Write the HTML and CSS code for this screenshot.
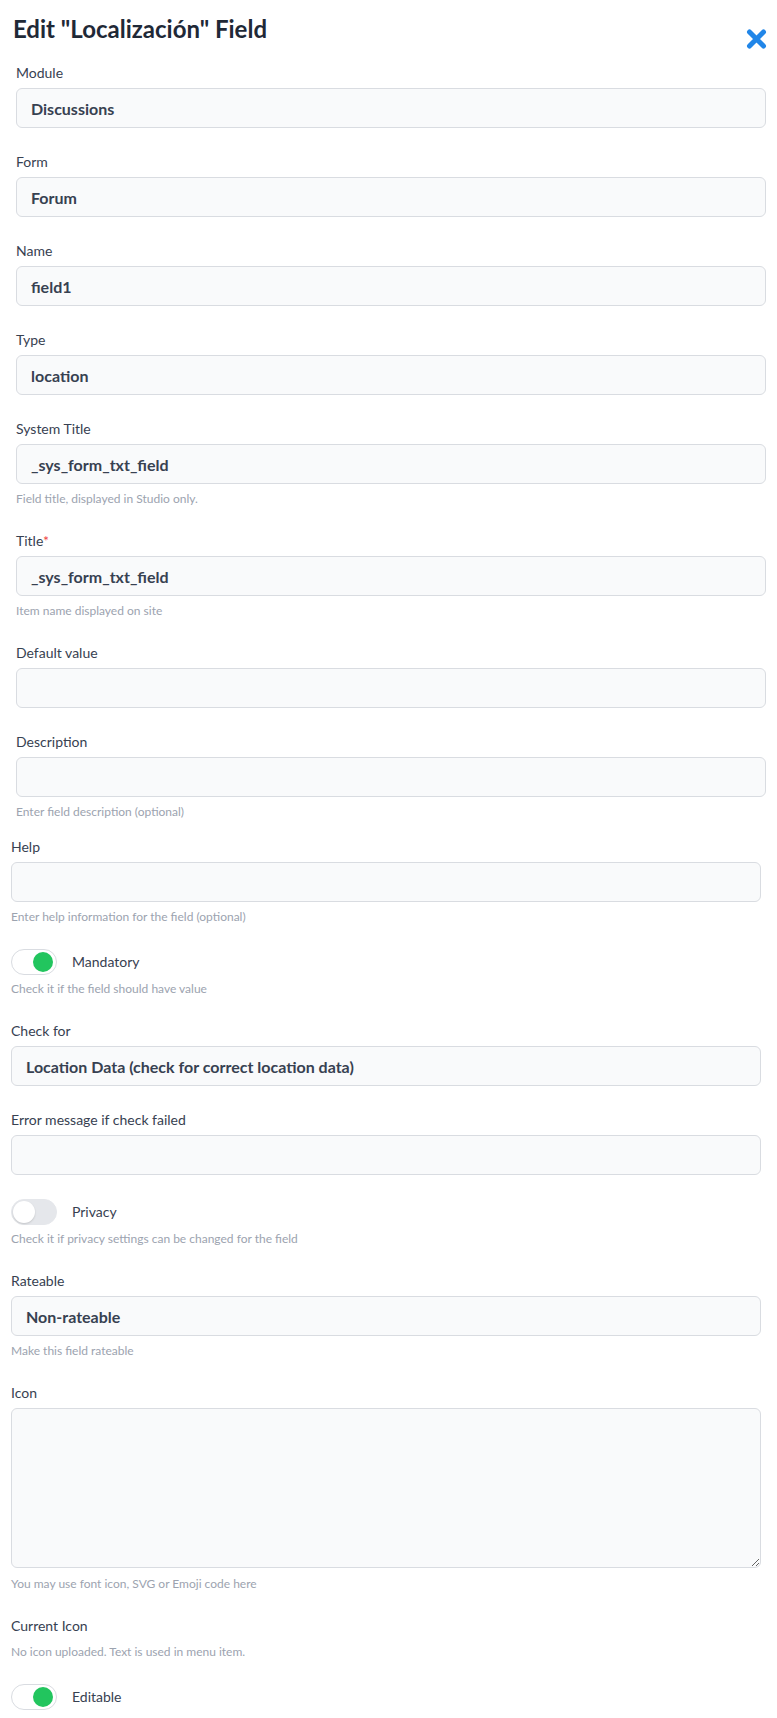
FILE: index.html
```html
<!DOCTYPE html>
<html lang="en">
<head>
<meta charset="utf-8">
<title>Edit Field</title>
<link rel="stylesheet" href="styles.css">
</head>
<body>
<div class="page">
  <header class="head">
    <h1 class="title">Edit "Localización" Field</h1>
    <button class="close" type="button" aria-label="Close">
      <svg width="21" height="20" viewBox="0 0 21 20"><path d="M3.5 3 L17.5 17 M17.5 3 L3.5 17" stroke="#2186e8" stroke-width="5" stroke-linecap="round" fill="none"/></svg>
    </button>
  </header>

  <section class="sec sec-a">
    <div class="grp">
      <label class="lbl">Module</label>
      <div class="inp">Discussions</div>
    </div>
    <div class="grp">
      <label class="lbl">Form</label>
      <div class="inp">Forum</div>
    </div>
    <div class="grp">
      <label class="lbl">Name</label>
      <div class="inp">field1</div>
    </div>
    <div class="grp">
      <label class="lbl">Type</label>
      <div class="inp">location</div>
    </div>
    <div class="grp">
      <label class="lbl">System Title</label>
      <div class="inp">_sys_form_txt_field</div>
      <div class="hint">Field title, displayed in Studio only.</div>
    </div>
    <div class="grp">
      <label class="lbl">Title<span class="req">*</span></label>
      <div class="inp">_sys_form_txt_field</div>
      <div class="hint">Item name displayed on site</div>
    </div>
    <div class="grp">
      <label class="lbl">Default value</label>
      <div class="inp"></div>
    </div>
    <div class="grp">
      <label class="lbl">Description</label>
      <div class="inp"></div>
      <div class="hint">Enter field description (optional)</div>
    </div>
  </section>

  <section class="sec sec-b">
    <div class="grp">
      <label class="lbl">Help</label>
      <div class="inp"></div>
      <div class="hint">Enter help information for the field (optional)</div>
    </div>
    <div class="grp">
      <div class="sw-row"><span class="sw on"></span><span class="sw-text">Mandatory</span></div>
      <div class="hint hint-sw">Check it if the field should have value</div>
    </div>
    <div class="grp">
      <label class="lbl">Check for</label>
      <div class="inp">Location Data (check for correct location data)</div>
    </div>
    <div class="grp">
      <label class="lbl">Error message if check failed</label>
      <div class="inp"></div>
    </div>
    <div class="grp">
      <div class="sw-row"><span class="sw off"></span><span class="sw-text">Privacy</span></div>
      <div class="hint hint-sw">Check it if privacy settings can be changed for the field</div>
    </div>
    <div class="grp">
      <label class="lbl">Rateable</label>
      <div class="inp">Non-rateable</div>
      <div class="hint">Make this field rateable</div>
    </div>
    <div class="grp">
      <label class="lbl">Icon</label>
      <textarea class="area"></textarea>
      <div class="hint hint-area">You may use font icon, SVG or Emoji code here</div>
    </div>
    <div class="grp">
      <label class="lbl lbl-cur">Current Icon</label>
      <div class="hint hint-cur">No icon uploaded. Text is used in menu item.</div>
    </div>
    <div class="grp">
      <div class="sw-row"><span class="sw on"></span><span class="sw-text">Editable</span></div>
    </div>
  </section>
</div>
</body>
</html>
```

FILE: styles.css
```css
* { box-sizing: border-box; }
html, body { margin: 0; padding: 0; background: #ffffff; }
body {
  font-family: Lato, "Open Sans", "Liberation Sans", sans-serif;
  color: #374151;
  width: 777px;
}
.page { padding: 0; }
.head {
  display: flex;
  justify-content: space-between;
  align-items: flex-start;
  padding: 14px 10px 0 13px;
  height: 63px;
}
.title {
  margin: 0;
  font-size: 24px;
  line-height: 30px;
  font-weight: 700;
  color: #1f2937;
}
.close {
  border: 0;
  background: none;
  padding: 0;
  margin-top: 15px;
  width: 21px;
  height: 20px;
  cursor: pointer;
}
.close svg { display: block; }
.sec { display: flex; flex-direction: column; width: 750px; }
.sec-a { margin-left: 16px; gap: 24px; }
.sec-b { margin-left: 11px; margin-top: 17px; gap: 24px; }
.grp { display: flex; flex-direction: column; }
.lbl {
  display: block;
  font-size: 14px;
  line-height: 20px;
  color: #374151;
  margin-bottom: 5px;
}
.lbl-cur { margin-bottom: 0; }
.req { color: #ef4444; }
.inp {
  height: 40px;
  border: 1px solid #d9dce1;
  border-radius: 6px;
  background: #f9fafb;
  padding: 0 14px;
  display: flex;
  align-items: center;
  font-size: 16px;
  font-weight: 700;
  color: #374151;
}
.hint {
  font-size: 12px;
  line-height: 16px;
  color: #9ca3af;
  margin-top: 7px;
}
.hint-sw { margin-top: 6px; }
.hint-cur { margin-top: 8px; }
.hint-area { margin-top: 8px; }
.area {
  display: block;
  width: 750px;
  height: 160px;
  border: 1px solid #d9dce1;
  border-radius: 6px;
  background: #f9fafb;
  resize: vertical;
  font: inherit;
  margin: 0;
}
.sw-row { display: flex; align-items: center; gap: 15px; height: 26px; }
.sw {
  position: relative;
  display: block;
  width: 46px;
  height: 26px;
  border-radius: 13px;
  border: 1px solid #d9dce1;
  background: #ffffff;
}
.sw::after {
  content: "";
  position: absolute;
  top: 2px;
  width: 20px;
  height: 20px;
  border-radius: 50%;
}
.sw.on::after { right: 3px; background: #22c55e; }
.sw.off { background: #e5e7eb; border-color: #e5e7eb; }
.sw.off::after { left: 1px; background: #ffffff; box-shadow: 0 1px 2px rgba(0,0,0,0.15); width: 22px; height: 22px; top: 1px; }
.sw-text { font-size: 14px; line-height: 20px; color: #374151; }
```
